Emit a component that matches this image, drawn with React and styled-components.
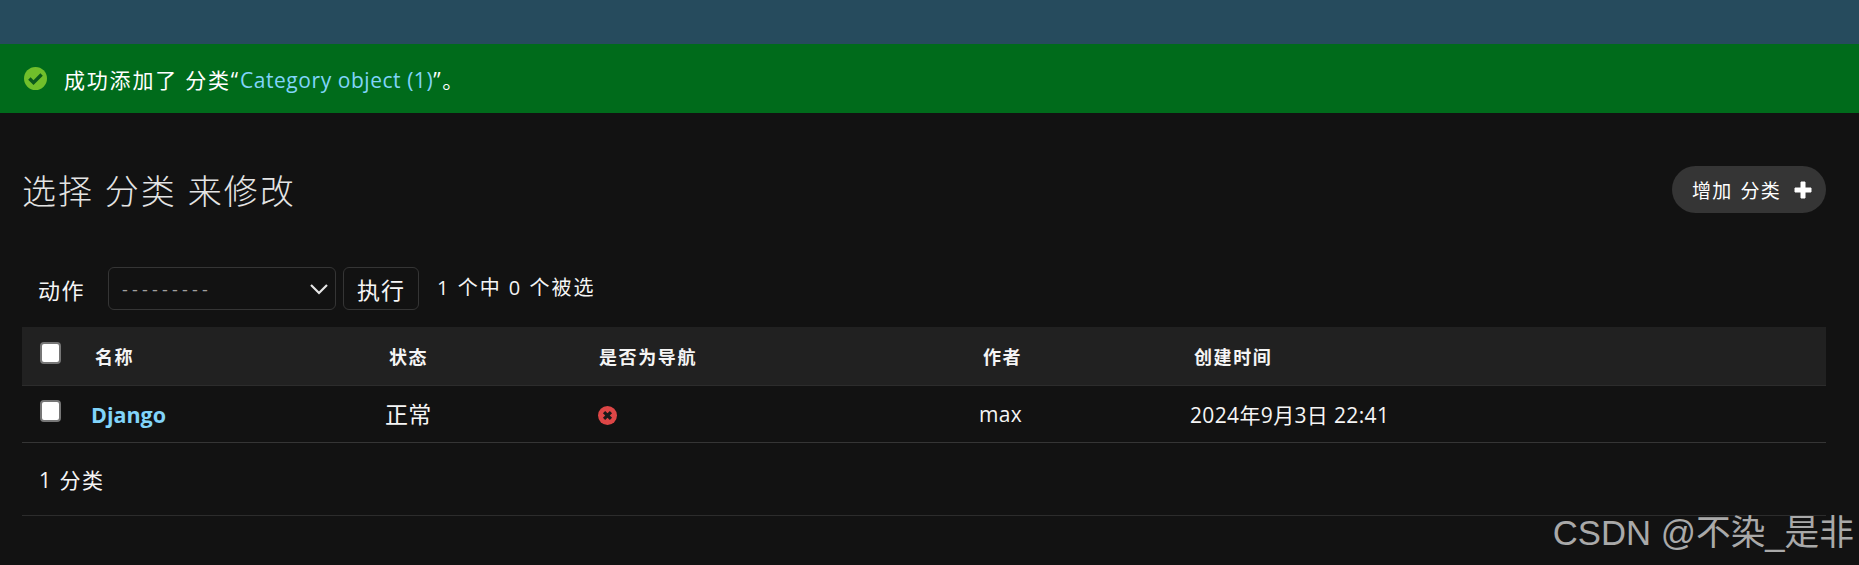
import React from 'react'
import styled, { createGlobalStyle } from 'styled-components'

const GlobalStyle = createGlobalStyle`
  html, body {
    margin: 0;
    height: 100%;
    background: #121212;
    color: #f5f5f5;
    font-family: "Open Sans", "Noto Sans CJK SC", sans-serif;
  }
`

const Page = styled.div`
  position: relative;
  width: 1859px;
  height: 565px;
  overflow: hidden;
  background: #121212;
`

const Header = styled.header`
  height: 44px;
  background: #264b5d;
`

const Message = styled.div`
  display: flex;
  align-items: center;
  gap: 17px;
  height: 69px;
  padding-left: 24px;
  background: #006b1b;
  font-size: 21px;
  letter-spacing: 1.8px;
  color: #fff;

  a {
    color: #81d4fa;
    text-decoration: none;
    letter-spacing: 0.55px;
  }
`

const Content = styled.main`
  padding: 0 33px 0 22px;
`

const TitleRow = styled.div`
  display: flex;
  align-items: center;
  justify-content: space-between;
  height: 47px;
  margin-top: 53px;
`

const Title = styled.h1`
  margin: 0;
  font-size: 34px;
  font-weight: 300;
  letter-spacing: 2px;
  color: #e4e4e4;
`

const AddLink = styled.a`
  display: flex;
  align-items: center;
  justify-content: space-between;
  box-sizing: border-box;
  width: 154px;
  height: 47px;
  padding: 0 14px 0 20px;
  border-radius: 24px;
  background: #353535;
  color: #fff;
  font-size: 19px;
  letter-spacing: 1.2px;
  word-spacing: 2px;
  text-decoration: none;
`

const Actions = styled.div`
  display: flex;
  align-items: center;
  height: 43px;
  margin-top: 54px;
  padding-left: 16px;
  font-size: 22px;
`

const ActionLabel = styled.span`
  width: 70px;
  letter-spacing: 1.6px;
`

const FakeSelect = styled.div`
  display: flex;
  align-items: center;
  justify-content: space-between;
  box-sizing: border-box;
  width: 228px;
  height: 43px;
  padding: 0 4px 0 13px;
  border: 1px solid #353535;
  border-radius: 6px;
  color: #a0a0a0;
  font-size: 18px;
  letter-spacing: 4.2px;
`

const GoButton = styled.button`
  box-sizing: border-box;
  width: 76px;
  height: 43px;
  margin-left: 7px;
  padding: 0;
  border: 1px solid #353535;
  border-radius: 6px;
  background: #121212;
  color: #f5f5f5;
  font-family: inherit;
  font-size: 23px;
  letter-spacing: 1px;
`

const Counter = styled.span`
  margin: -5px 0 0 18px;
  font-size: 20px;
  letter-spacing: 2px;
`

const Table = styled.div`
  margin-top: 17px;
`

const Row = styled.div`
  display: grid;
  grid-template-columns: 69px 294px 213px 381px 211px 1fr;
  align-items: center;
  box-sizing: border-box;
  height: ${p => (p.$head ? '59px' : '57px')};
  background: ${p => (p.$head ? '#212121' : 'transparent')};
  border-bottom: 1px solid ${p => (p.$head ? '#2c2c2c' : '#353535')};
  font-size: ${p => (p.$head ? '18px' : '21px')};
  font-weight: ${p => (p.$head ? 700 : 400)};
`

const Cell = styled.div`
  display: flex;
  align-items: center;
  padding-left: ${p => p.$inset || 0}px;
  letter-spacing: ${p => (p.$head ? '1.6px' : '0.35px')};
  font-size: ${p => (p.$cjk ? '23px' : 'inherit')};
  margin-top: ${p => (p.$cjk ? '-2px' : '0')};
`

const CheckCell = styled.div`
  display: flex;
  padding: 0 0 6px 18px;
`

const Check = styled.input.attrs({ type: 'checkbox' })`
  appearance: none;
  box-sizing: border-box;
  width: 21px;
  height: 22px;
  margin: 0;
  border: 2px solid #767676;
  border-radius: 4px;
  background: #fff;
`

const NameLink = styled.a`
  color: #81d4fa;
  font-weight: 700;
  font-size: 21.5px;
  letter-spacing: 0;
  text-decoration: none;
`

const Paginator = styled.div`
  display: flex;
  align-items: center;
  height: 72px;
  padding-left: 17px;
  border-bottom: 1px solid #2c2c2c;
  font-size: 21px;
  letter-spacing: 1.5px;
`

const Watermark = styled.div`
  position: absolute;
  right: 5px;
  top: 513px;
  color: #a9a9a9;
  font-family: "Liberation Sans", "Noto Sans CJK SC", sans-serif;
  font-size: 34.7px;
  line-height: 41px;
  white-space: nowrap;
`

const SuccessIcon = () => (
  <svg width="23" height="23" viewBox="0 0 1792 1792" style={{ flex: 'none' }}>
    <circle cx="896" cy="896" r="896" fill="#70bf2b" />
    <path d="M420 900 L740 1220 L1370 590" fill="none" stroke="#0a5a1c" strokeWidth="270" />
  </svg>
)

const NoIcon = () => (
  <svg width="19" height="19" viewBox="0 0 1792 1792" style={{ marginTop: 3 }}>
    <circle cx="896" cy="896" r="896" fill="#dd4646" />
    <path d="M570 570 L1222 1222 M1222 570 L570 1222" stroke="#1a1a1a" strokeWidth="300" />
  </svg>
)

const PlusIcon = () => (
  <svg width="18" height="18" viewBox="0 0 18 18">
    <path d="M7 1h4v6h6v4h-6v6H7v-6H1V7h6z" fill="#fff" stroke="#fff" strokeWidth="1" strokeLinejoin="round" />
  </svg>
)

const Chevron = () => (
  <svg width="24" height="24" viewBox="0 0 24 24" fill="none" stroke="#e6e6e6" strokeWidth="2.2">
    <path d="M4 8l8 8 8-8" />
  </svg>
)

export default function App() {
  return (
    <Page>
      <GlobalStyle />
      <Header />
      <Message>
        <SuccessIcon />
        <span>成功添加了 分类“<a href="#">Category object (1)</a>”。</span>
      </Message>
      <Content>
        <TitleRow>
          <Title>选择 分类 来修改</Title>
          <AddLink href="#">增加 分类<PlusIcon /></AddLink>
        </TitleRow>
        <Actions>
          <ActionLabel>动作</ActionLabel>
          <FakeSelect>---------<Chevron /></FakeSelect>
          <GoButton>执行</GoButton>
          <Counter>1 个中 0 个被选</Counter>
        </Actions>
        <Table>
          <Row $head>
            <CheckCell><Check /></CheckCell>
            <Cell $head $inset={4}>名称</Cell>
            <Cell $head $inset={4}>状态</Cell>
            <Cell $head $inset={1}>是否为导航</Cell>
            <Cell $head $inset={4}>作者</Cell>
            <Cell $head $inset={4}>创建时间</Cell>
          </Row>
          <Row>
            <CheckCell><Check /></CheckCell>
            <Cell><NameLink href="#">Django</NameLink></Cell>
            <Cell $cjk>正常</Cell>
            <Cell><NoIcon /></Cell>
            <Cell>max</Cell>
            <Cell>2024年9月3日 22:41</Cell>
          </Row>
        </Table>
        <Paginator>1 分类</Paginator>
      </Content>
      <Watermark>CSDN @不染_是非</Watermark>
    </Page>
  )
}
